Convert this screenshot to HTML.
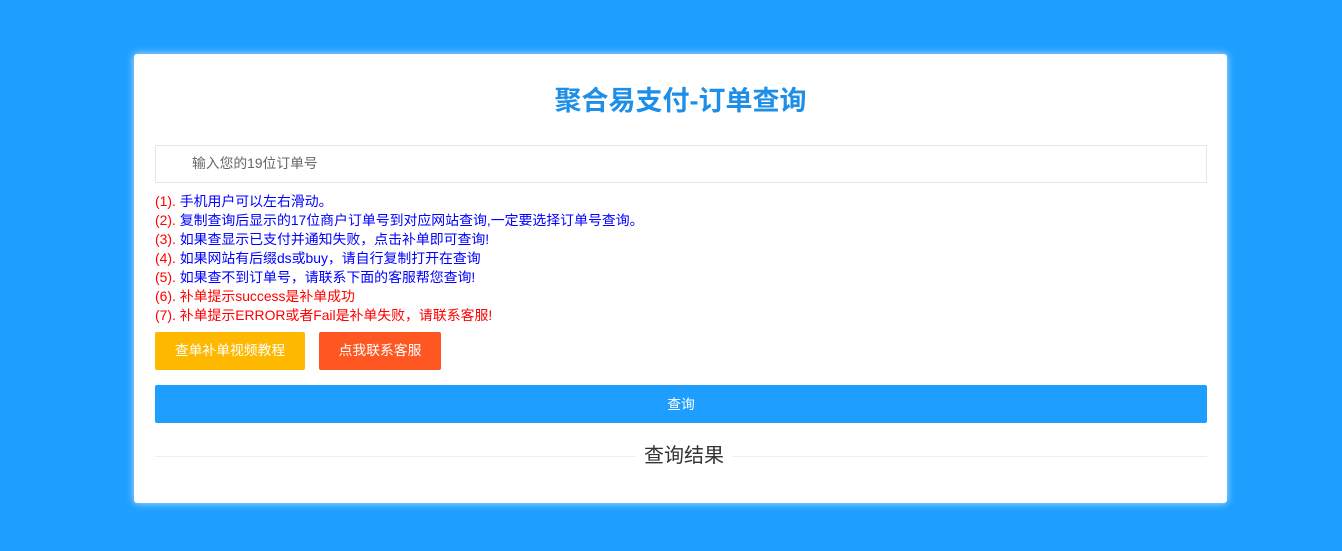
<!DOCTYPE html>
<html><head><meta charset="utf-8"><style>
body{margin:0;background:#1e9fff;width:1342px;height:551px;overflow:hidden;font-family:"Liberation Sans","Noto Sans CJK SC",sans-serif;}
.card{position:absolute;left:134px;top:54px;width:1093px;height:449px;background:#fff;border-radius:3px;box-shadow:0 0 8px rgba(255,255,255,.7);}
h1{position:absolute;left:134px;width:1093px;top:84px;margin:0;text-align:center;font-size:27px;font-weight:bold;color:#1e8fe8;line-height:34px;}
.in{position:absolute;left:155px;top:145px;width:1050px;height:36px;border:1px solid #e6e6e6;font-size:13.8px;color:#666;line-height:36px;box-sizing:content-box;}
.in span{margin-left:36px}
.tips{position:absolute;left:155px;top:192px;font-size:13.9px;line-height:19px;}
.r{color:#f00}.b{color:#00f}
.btn{position:absolute;top:332px;height:38px;line-height:38px;color:#fff;font-size:13.8px;text-align:center;border-radius:2px;}
.q{position:absolute;left:155px;top:385px;width:1052px;height:38px;line-height:40px;background:#1e9fff;color:#fff;text-align:center;font-size:13.8px;border-radius:2px;}
.line{position:absolute;left:155px;width:1052px;top:456px;height:1px;background:#eee;}
.res{position:absolute;left:636px;top:444px;padding:0 8px;background:#fff;font-size:20px;color:#333;line-height:24px;}
</style></head><body>
<div class="card"></div>
<h1>聚合易支付-订单查询</h1>
<div class="in"><span>输入您的19位订单号</span></div>
<div class="tips">
<div><span class="r">(1).</span> <span class="b">手机用户可以左右滑动。</span></div>
<div><span class="r">(2).</span> <span class="b">复制查询后显示的17位商户订单号到对应网站查询,一定要选择订单号查询。</span></div>
<div><span class="r">(3).</span> <span class="b">如果查显示已支付并通知失败，点击补单即可查询!</span></div>
<div><span class="r">(4).</span> <span class="b">如果网站有后缀ds或buy，请自行复制打开在查询</span></div>
<div><span class="r">(5).</span> <span class="b">如果查不到订单号，请联系下面的客服帮您查询!</span></div>
<div class="r">(6). 补单提示success是补单成功</div>
<div class="r">(7). 补单提示ERROR或者Fail是补单失败，请联系客服!</div>
</div>
<div class="btn" style="left:155px;width:150px;background:#ffb800">查单补单视频教程</div>
<div class="btn" style="left:319px;width:122px;background:#ff5722">点我联系客服</div>
<div class="q">查询</div>
<div class="line"></div>
<div class="res">查询结果</div>
</body></html>
